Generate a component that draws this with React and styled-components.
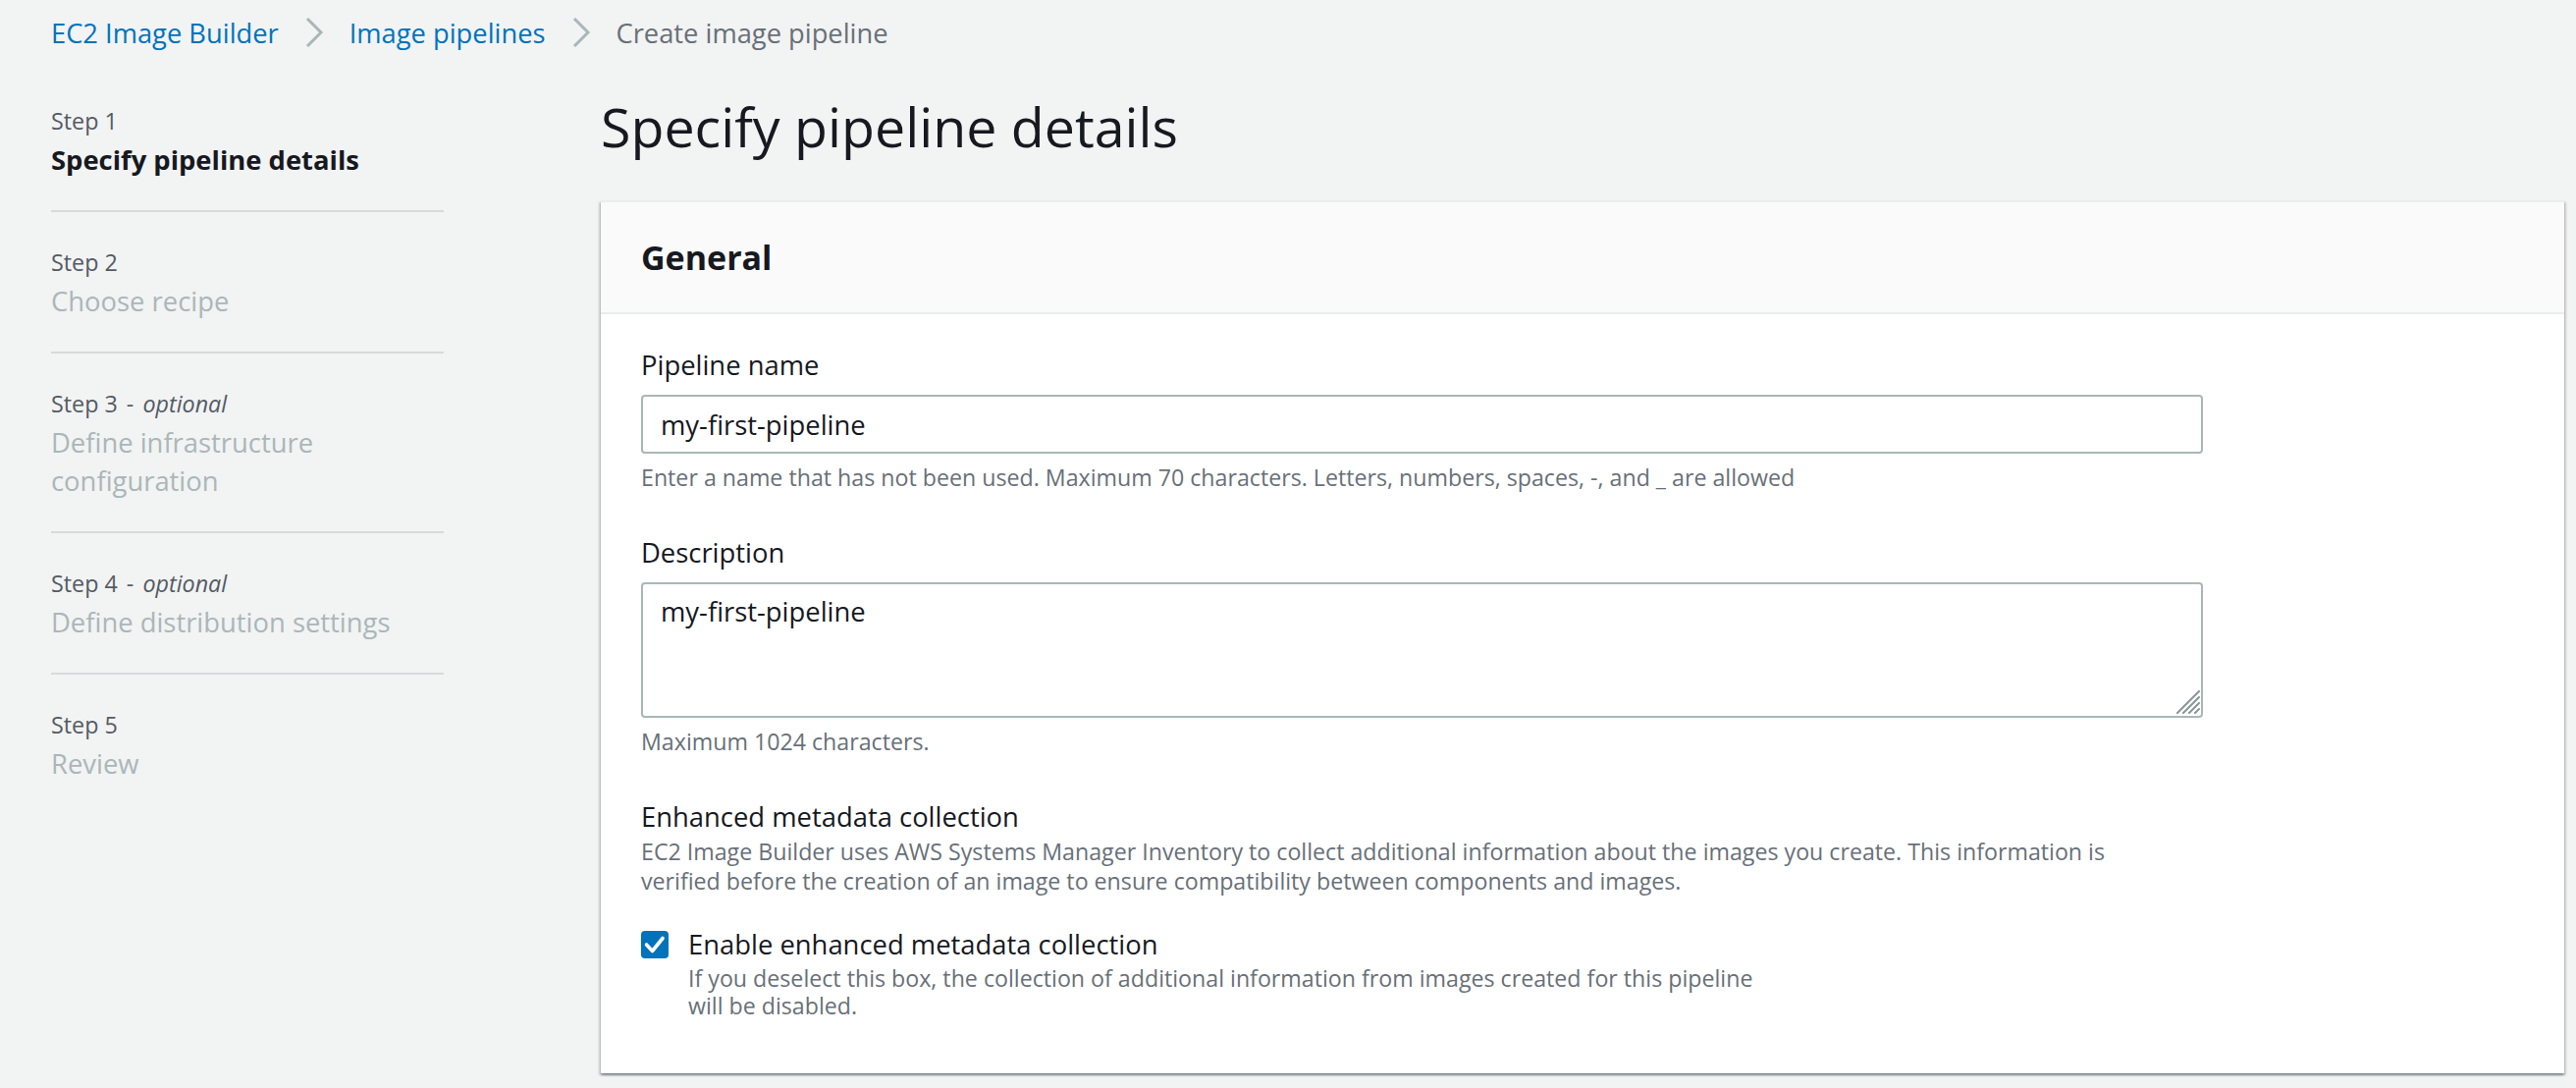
import React from 'react'
import styled, { createGlobalStyle } from 'styled-components'

const FONT = "'Open Sans', 'Liberation Sans', sans-serif"

const GlobalStyle = createGlobalStyle`
  html, body {
    margin: 0;
    padding: 0;
    background: #f2f3f3;
  }
  body {
    font-family: ${FONT};
    color: #16191f;
  }
  * {
    box-sizing: border-box;
  }
`

const Page = styled.div`
  min-height: 100vh;
  padding: 0 12px 0 52px;
`

const Breadcrumbs = styled.nav`
  display: flex;
  align-items: center;
  gap: 26px;
  height: 66px;
  font-size: 27.3px;
`

const Crumb = styled.span`
  color: ${(p) => (p.current ? '#687078' : '#0073bb')};
  white-space: nowrap;
`

const Layout = styled.div`
  display: grid;
  grid-template-columns: 400px 2000px;
  column-gap: 160px;
`

const Sidebar = styled.ol`
  list-style: none;
  margin: 0;
  padding: 37px 0 0;
`

const StepItem = styled.li`
  padding: 31px 0 32px;
  border-bottom: 2px solid #d5dbdb;
  &:first-child {
    padding-top: 0;
  }
  &:last-child {
    border-bottom: none;
  }
`

const StepLabel = styled.div`
  font-size: 23.3px;
  line-height: 40px;
  color: #545b64;
  em {
    font-style: italic;
  }
`

const Dash = styled.span`
  margin: 0 3px;
`

const StepTitle = styled.div`
  font-size: 27.4px;
  line-height: 39px;
  font-weight: ${(p) => (p.active ? 700 : 400)};
  color: ${(p) => (p.active ? '#16191f' : '#aab7b8')};
`

const Main = styled.main`
  padding-top: 31px;
`

const Heading = styled.h1`
  margin: 0 0 43px;
  font-size: 55.5px;
  line-height: 64px;
  font-weight: 400;
  color: #16191f;
`

const Card = styled.section`
  background: #ffffff;
  border-top: 2px solid #eaeded;
  box-shadow: 0 2px 2px 0 rgba(0, 28, 36, 0.3), 2px 2px 2px 0 rgba(0, 28, 36, 0.15),
    -2px 2px 2px 0 rgba(0, 28, 36, 0.15);
`

const CardHeader = styled.header`
  display: flex;
  align-items: center;
  height: 114px;
  padding: 0 41px;
  background: #fafafa;
  border-bottom: 2px solid #eaeded;
  h2 {
    margin: 0;
    font-size: 34px;
    font-weight: 700;
    color: #16191f;
  }
`

const CardBody = styled.div`
  padding: 32px 41px 55px;
`

const Field = styled.div`
  width: 1591px;
  & + & {
    margin-top: 41px;
  }
`

const Label = styled.div`
  font-size: 27.4px;
  line-height: 40px;
  color: #16191f;
`

const Hint = styled.div`
  margin-top: ${(p) => (p.gap === undefined ? 8 : p.gap)}px;
  font-size: 23.2px;
  line-height: ${(p) => p.lh || 32}px;
  color: #687078;
`

const TextInput = styled.input`
  display: block;
  width: 100%;
  height: 60px;
  margin-top: 10px;
  padding: 8px 18px;
  border: 2px solid #aab7b8;
  border-radius: 4px;
  font-family: ${FONT};
  font-size: 27.4px;
  line-height: 40px;
  color: #16191f;
  background: #ffffff;
  outline: none;
`

const AreaWrap = styled.div`
  position: relative;
  margin-top: 10px;
`

const TextArea = styled.textarea`
  display: block;
  width: 100%;
  height: 138px;
  padding: 8px 18px;
  border: 2px solid #aab7b8;
  border-radius: 4px;
  font-family: ${FONT};
  font-size: 27.4px;
  line-height: 40px;
  color: #16191f;
  background: #ffffff;
  outline: none;
  resize: none;
`

const Grip = styled.svg`
  position: absolute;
  right: 3px;
  bottom: 4px;
  pointer-events: none;
`

const CheckRow = styled.div`
  display: flex;
  align-items: flex-start;
  gap: 20px;
  margin-top: 30px;
`

const CheckBox = styled.span`
  flex: none;
  display: block;
  width: 28px;
  height: 28px;
  margin-top: 6px;
  border-radius: 4px;
  background: #0073bb;
`

const Chevron = () => (
  <svg width="20" height="30" viewBox="0 0 20 30" aria-hidden="true">
    <polyline points="3,1 17,15 3,29" fill="none" stroke="#aab7b8" strokeWidth="3" />
  </svg>
)

const steps = [
  { label: 'Step 1', title: ['Specify pipeline details'], active: true },
  { label: 'Step 2', title: ['Choose recipe'] },
  { label: 'Step 3', optional: true, title: ['Define infrastructure', 'configuration'] },
  { label: 'Step 4', optional: true, title: ['Define distribution settings'] },
  { label: 'Step 5', title: ['Review'] },
]

export default function App() {
  return (
    <>
      <GlobalStyle />
      <Page>
        <Breadcrumbs>
          <Crumb>EC2 Image Builder</Crumb>
          <Chevron />
          <Crumb>Image pipelines</Crumb>
          <Chevron />
          <Crumb current>Create image pipeline</Crumb>
        </Breadcrumbs>
        <Layout>
          <Sidebar>
            {steps.map((s) => (
              <StepItem key={s.label}>
                <StepLabel>
                  {s.label}
                  {s.optional && (
                    <>
                      {' '}
                      <Dash>-</Dash> <em>optional</em>
                    </>
                  )}
                </StepLabel>
                <StepTitle active={s.active}>
                  {s.title.map((line, i) => (
                    <div key={i}>{line}</div>
                  ))}
                </StepTitle>
              </StepItem>
            ))}
          </Sidebar>
          <Main>
            <Heading>Specify pipeline details</Heading>
            <Card>
              <CardHeader>
                <h2>General</h2>
              </CardHeader>
              <CardBody>
                <Field>
                  <Label>Pipeline name</Label>
                  <TextInput defaultValue="my-first-pipeline" />
                  <Hint>
                    Enter a name that has not been used. Maximum 70 characters. Letters, numbers,
                    spaces, -, and _ are allowed
                  </Hint>
                </Field>
                <Field>
                  <Label>Description</Label>
                  <AreaWrap>
                    <TextArea defaultValue="my-first-pipeline" />
                    <Grip width="24" height="24" viewBox="0 0 24 24" aria-hidden="true">
                      <g stroke="#879596" strokeWidth="2" strokeLinecap="round">
                        <line x1="1" y1="23" x2="23" y2="1" />
                        <line x1="7" y1="23" x2="23" y2="7" />
                        <line x1="13" y1="23" x2="23" y2="13" />
                        <line x1="19" y1="23" x2="23" y2="19" />
                      </g>
                    </Grip>
                  </AreaWrap>
                  <Hint>Maximum 1024 characters.</Hint>
                </Field>
                <Field>
                  <Label>Enhanced metadata collection</Label>
                  <Hint gap={0} lh={30}>
                    EC2 Image Builder uses AWS Systems Manager Inventory to collect additional
                    information about the images you create. This information is
                    <br />
                    verified before the creation of an image to ensure compatibility between
                    components and images.
                  </Hint>
                  <CheckRow>
                    <CheckBox>
                      <svg width="28" height="28" viewBox="0 0 28 28" aria-hidden="true">
                        <polyline
                          points="5.5,14 11.5,20.5 22,7.5"
                          fill="none"
                          stroke="#ffffff"
                          strokeWidth="3.6"
                          strokeLinecap="round"
                          strokeLinejoin="round"
                        />
                      </svg>
                    </CheckBox>
                    <div>
                      <Label>Enable enhanced metadata collection</Label>
                      <Hint gap={0} lh={28}>
                        If you deselect this box, the collection of additional information from
                        images created for this pipeline
                        <br />
                        will be disabled.
                      </Hint>
                    </div>
                  </CheckRow>
                </Field>
              </CardBody>
            </Card>
          </Main>
        </Layout>
      </Page>
    </>
  )
}
